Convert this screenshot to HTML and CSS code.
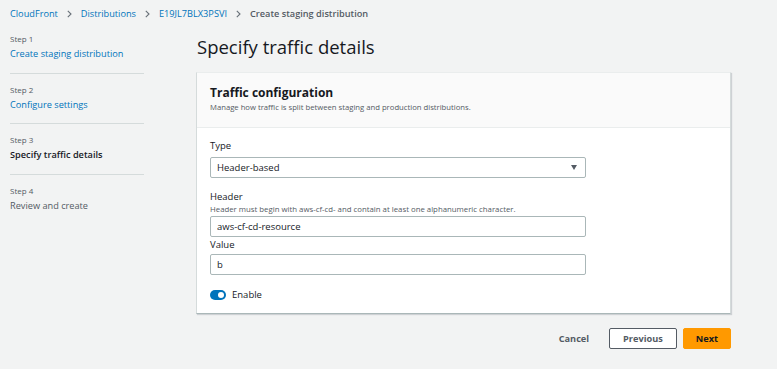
FILE: index.html
```html
<!DOCTYPE html>
<html lang="en">
<head>
    <meta charset="UTF-8">
    <meta name="viewport" content="width=device-width, initial-scale=1.0">
    <title>Create staging distribution</title>
    <link rel="stylesheet" href="styles.css">
</head>
<body>
    <div class="breadcrumbs">
        <a href="#">CloudFront</a>
        <svg class="sep" width="5" height="8" viewBox="0 0 5 8"><path d="M0.8 0.8 L4 4 L0.8 7.2" fill="none" stroke="#687078" stroke-width="1.1"/></svg>
        <a href="#">Distributions</a>
        <svg class="sep" width="5" height="8" viewBox="0 0 5 8"><path d="M0.8 0.8 L4 4 L0.8 7.2" fill="none" stroke="#687078" stroke-width="1.1"/></svg>
        <a href="#">E19JL7BLX3PSVI</a>
        <svg class="sep" width="5" height="8" viewBox="0 0 5 8"><path d="M0.8 0.8 L4 4 L0.8 7.2" fill="none" stroke="#687078" stroke-width="1.1"/></svg>
        <span class="current">Create staging distribution</span>
    </div>

    <div class="layout">
        <!-- Wizard steps -->
        <ul class="steps">
            <li class="step">
                <div class="step-label">Step 1</div>
                <a class="step-title" href="#">Create staging distribution</a>
            </li>
            <li class="step">
                <div class="step-label">Step 2</div>
                <a class="step-title" href="#">Configure settings</a>
            </li>
            <li class="step">
                <div class="step-label">Step 3</div>
                <div class="step-title active">Specify traffic details</div>
            </li>
            <li class="step last">
                <div class="step-label">Step 4</div>
                <div class="step-title disabled">Review and create</div>
            </li>
        </ul>

        <div class="main">
            <h1 class="page-title">Specify traffic details</h1>

            <div class="panel">
                <div class="panel-header">
                    <h2>Traffic configuration</h2>
                    <p>Manage how traffic is split between staging and production distributions.</p>
                </div>
                <div class="panel-body">
                    <div class="field">
                        <label class="field-label">Type</label>
                        <div class="select">
                            <span>Header-based</span>
                            <span class="caret"></span>
                        </div>
                    </div>

                    <div class="field">
                        <label class="field-label with-help">Header</label>
                        <div class="field-help">Header must begin with aws-cf-cd- and contain at least one alphanumeric character.</div>
                        <input class="text-input" type="text" value="aws-cf-cd-resource">
                    </div>

                    <div class="field tight">
                        <label class="field-label">Value</label>
                        <input class="text-input" type="text" value="b">
                    </div>

                    <div class="toggle-row">
                        <span class="toggle"><span class="knob"></span></span>
                        <span>Enable</span>
                    </div>
                </div>
            </div>

            <div class="actions">
                <button class="btn-link">Cancel</button>
                <button class="btn">Previous</button>
                <button class="btn primary">Next</button>
            </div>
        </div>
    </div>
</body>
</html>
```

FILE: styles.css
```css
body {
    margin: 0;
    padding: 0;
    background: #f2f3f3;
    color: #16191f;
    font-family: "Open Sans", Arial, sans-serif;
}

a {
    color: #0073bb;
    text-decoration: none;
}

/* Breadcrumbs */
.breadcrumbs {
    display: flex;
    align-items: center;
    gap: 9px;
    padding: 6px 10px 1px;
    height: 16px;
    font-size: 9.2px;
    line-height: 16px;
}

.breadcrumbs .current {
    color: #545b64;
    font-weight: 600;
}

.layout {
    display: flex;
    align-items: flex-start;
    padding-left: 10px;
}

/* Steps */
.steps {
    list-style: none;
    margin: 0;
    padding: 0;
    width: 134px;
}

.step {
    padding: 9px 0 10px;
    border-bottom: 1px solid #d5dbdb;
}

.step.last {
    border-bottom: none;
}

.step-label {
    font-size: 8px;
    line-height: 14px;
    color: #545b64;
}

.step-title {
    display: block;
    font-size: 9.2px;
    line-height: 16.5px;
}

.step-title.active {
    font-weight: 600;
    color: #16191f;
}

.step-title.disabled {
    color: #545b64;
}

/* Main */
.main {
    margin-left: 52px;
    width: 535px;
}

.page-title {
    margin: 12px 0 13px 1px;
    font-size: 18.5px;
    line-height: 24px;
    font-weight: 400;
}

.panel {
    background: #fff;
    border: 1px solid #d5dbdb;
    border-top-color: #eaeded;
    border-bottom-color: #aab7b8;
    box-shadow: 1px 1px 1px rgba(0, 22, 37, 0.15);
}

.panel-header {
    background: #fafafa;
    padding: 12px 13px 14px;
    border-bottom: 1px solid #eaeded;
}

.panel-header h2 {
    margin: 0;
    font-size: 12px;
    line-height: 16px;
    font-weight: 700;
}

.panel-header p {
    margin: 0;
    font-size: 7.7px;
    line-height: 12px;
    color: #545b64;
}

.panel-body {
    padding: 11px 13px 10px;
}

.field {
    width: 376px;
    margin-bottom: 12px;
}

.field.tight {
    margin-top: -11px;
}

.field-label {
    display: block;
    font-size: 9.5px;
    line-height: 14px;
    margin-bottom: 4px;
}

.field-label.with-help {
    margin-bottom: 0;
}

.field-help {
    font-size: 7.8px;
    line-height: 12px;
    color: #545b64;
    margin: -1px 0 1px;
}

.select,
.text-input {
    box-sizing: border-box;
    display: flex;
    align-items: center;
    justify-content: space-between;
    width: 100%;
    height: 21px;
    margin: 0;
    padding: 0 8px 0 6px;
    border: 1px solid #aab7b8;
    border-radius: 2px;
    background: #fff;
    font-family: inherit;
    font-size: 9.5px;
    color: #16191f;
}

.tight .field-label {
    margin-bottom: 2px;
}

.caret {
    width: 0;
    height: 0;
    border-left: 3.5px solid transparent;
    border-right: 3.5px solid transparent;
    border-top: 5px solid #545b64;
}

.toggle-row {
    display: flex;
    align-items: center;
    gap: 6px;
    font-size: 9.5px;
    line-height: 16px;
}

.toggle {
    position: relative;
    width: 16px;
    height: 10px;
    border-radius: 5px;
    background: #0073bb;
}

.toggle .knob {
    position: absolute;
    top: 2px;
    right: 2px;
    width: 6px;
    height: 6px;
    border-radius: 50%;
    background: #fff;
}

/* Footer actions */
.actions {
    display: flex;
    justify-content: flex-end;
    align-items: center;
    gap: 6px;
    margin-top: 14px;
}

.btn-link,
.btn {
    height: 21px;
    font-family: inherit;
    font-size: 9.2px;
    font-weight: 700;
    color: #545b64;
    background: none;
    border: none;
    cursor: pointer;
}

.btn-link {
    padding: 0 10px;
    margin-right: 4px;
}

.btn {
    box-sizing: border-box;
    padding: 0 13px;
    background: #fff;
    border: 1px solid #545b64;
    border-radius: 2px;
}

.btn.primary {
    padding: 0 12px;
    background: #ff9900;
    border-color: #ff9900;
    color: #16191f;
}
```
